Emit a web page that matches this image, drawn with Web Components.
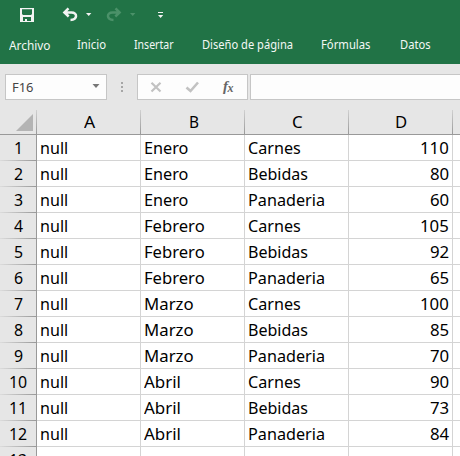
<!DOCTYPE html>
<html lang="es">
<head>
<meta charset="utf-8">
<title>Libro</title>
<style>
html,body{margin:0;width:460px;height:456px;overflow:hidden;background:#fff}
</style>
</head>
<body>
<excel-window></excel-window>
<script>
// Text run fitted to a given advance width.
customElements.define('fit-text', class extends HTMLElement {
  connectedCallback() {
    const root = this.attachShadow({mode:'open'});
    root.innerHTML = `<style>:host{display:inline-block;white-space:nowrap;width:${this.getAttribute('w')}px;text-align:left}span{display:inline-block;transform-origin:0 50%}</style><span><slot></slot></span>`;
    const s = root.querySelector('span');
    s.style.transform = `scaleX(${this.getAttribute('w') / s.getBoundingClientRect().width})`;
  }
});

customElements.define('quick-bar', class extends HTMLElement {
  connectedCallback() {
    this.attachShadow({mode:'open'}).innerHTML = `
<style>:host{display:block;height:30px}svg{display:block}</style>
<svg width="460" height="30" viewBox="0 0 460 30">
<path fill="#f3f3f3" fill-rule="evenodd" d="M20 8h14v14H20zM22 9.300V14l1 1h8l1-1V9.300zM23 17v4h2V19H27v2h4V17z"/>
<g fill="none" stroke="#f3f3f3" stroke-width="2.500"><path d="M68.500 8.300L64.400 12.500L68.700 16.500M65 12.500H71.500C77.700 12.500 77.700 19.700 70.500 19.900"/></g>
<path fill="#f3f3f3" d="M86 13h5.400l-2.700 3z"/>
<g fill="none" stroke="#4b9169" stroke-width="2.500"><path d="M115.500 8.300L119.600 12.500L115.300 16.500M119 12.500H112.500C106.300 12.500 106.300 19.700 113.500 19.900"/></g>
<path fill="#4b9169" d="M130 13h5.400l-2.700 3z"/>
<path fill="#f3f3f3" d="M158 12h5v1h-5zM158 15h5.200l-2.600 3z"/>
</svg>`;
  }
});

customElements.define('ribbon-tab', class extends HTMLElement {
  connectedCallback() {
    this.attachShadow({mode:'open'}).innerHTML = `
<style>:host{display:block;font:12.5px/18px "Noto Sans",sans-serif;color:#f4f8f5;height:18px}</style>
<fit-text w="${this.getAttribute('w')}">${this.getAttribute('label')}</fit-text>`;
  }
});

customElements.define('formula-bar', class extends HTMLElement {
  connectedCallback() {
    this.attachShadow({mode:'open'}).innerHTML = `
<style>
:host{display:flex;height:46px;padding:10px 0 0 5px;box-sizing:border-box;background:#e6e6e6}
.box{box-sizing:border-box;height:26px;border:1px solid #c6c6c6;background:#fdfdfd}
.name{width:102px;display:flex;justify-content:space-between;padding:0 6px;font:13px/25px "Noto Sans",sans-serif;color:#444}
.name svg{margin-top:9px}
.dots{width:30px}.tools{width:111px}.input{flex:1;margin-left:2px;border-right:0}
svg{display:block}
</style>
<div class="box name"><fit-text w="21.500">F16</fit-text><svg width="8" height="5"><path fill="#777" d="M0.500 0h7L4 4z"/></svg></div>
<svg class="dots" height="26" viewBox="0 0 30 26"><path fill="#a6a6a6" d="M14 8h2v2h-2zM14 12h2v2h-2zM14 16h2v2h-2z"/></svg>
<div class="box tools"><svg width="109" height="24" viewBox="0 0 109 24">
<path d="M13.500 7.700L22.500 16.500M22.500 7.700L13.500 16.500" stroke="#c2c2c2" stroke-width="2.200"/>
<path d="M48.500 12.500L52.500 16L60 7.500" fill="none" stroke="#c2c2c2" stroke-width="2.600"/>
<text x="85" y="16" font-family="Liberation Serif,serif" font-size="15" font-style="italic" font-weight="bold" fill="#666">f</text><text x="89.500" y="17" font-family="Liberation Serif,serif" font-size="12" font-style="italic" font-weight="bold" fill="#666">x</text>
</svg></div>
<div class="box input"></div>`;
  }
});

customElements.define('sheet-grid', class extends HTMLElement {
  connectedCallback() {
    const W = {null:28.2,Enero:44.4,Febrero:60.7,Marzo:49.6,Abril:37,Carnes:52.8,Bebidas:60,Panaderia:77};
    const months = ['Enero','Febrero','Marzo','Abril'], goods = ['Carnes','Bebidas','Panaderia'];
    const nums = [110,80,60,105,92,65,100,85,70,90,73,84];
    const t = s => `<fit-text w="${W[s] || String(s).length * 9.6}">${s}</fit-text>`;
    const cw = {A:11.2,B:10,C:10.7,D:12.2};
    let h = '<div class="corner"><svg width="37" height="25"><path fill="#b4b4b4" d="M33 4v17H16z"/></svg></div>';
    for (const c of 'ABCD') h += `<div class="col"><fit-text w="${cw[c]}">${c}</fit-text></div>`;
    h += '<div class="col last"></div>';
    for (let i = 0; i < 13; i++) {
      h += `<div class="row"><fit-text w="${String(i + 1).length * 9.100}">${i + 1}</fit-text></div>`;
      const v = i < 12 ? ['null', months[i / 3 | 0], goods[i % 3], nums[i]] : ['', '', '', ''];
      v.forEach((s, k) => h += `<div class="cell${k == 3 ? ' num' : ''}">${s === '' ? '' : t(s)}</div>`);
      h += '<div class="cell last"></div>';
    }
    this.attachShadow({mode:'open'}).innerHTML = `
<style>
:host{display:grid;grid-template-columns:37px repeat(4,104px) 7px;grid-template-rows:25px repeat(13,26px);height:346px;overflow:hidden;background:#fff;font:17px/26px "Noto Sans",sans-serif;color:#000}
div{box-sizing:border-box;overflow:hidden}
.corner,.col{border-bottom:1px solid #999;background:linear-gradient(#d0d0d0,#999) right/1px 100% no-repeat #e6e6e6}
.col{text-align:center;line-height:24px;padding-left:1px}
.col:nth-child(2){padding:0 1px 0 0}
.row{background:linear-gradient(90deg,#dcdcdc,#999) bottom/100% 1px no-repeat #e6e6e6;border-right:1px solid #999;text-align:center;padding-left:1px}
.cell{border-right:1px solid #d4d4d4;border-bottom:1px solid #d4d4d4;padding:0 3px}
.num{text-align:right}
.last{border-right:0}.col.last{background:#e6e6e6}
</style>${h}`;
  }
});

customElements.define('excel-window', class extends HTMLElement {
  connectedCallback() {
    this.attachShadow({mode:'open'}).innerHTML = `
<style>
:host{display:block;width:460px;height:456px;overflow:hidden}
header{background:#217346;height:64px}
nav{display:grid;grid-template-columns:68px 57px 68.500px 119px 79px 60px;padding:6px 0 0 8.500px}
ribbon-tab:first-child{margin-top:1px}
</style>
<header><quick-bar></quick-bar><nav>
<ribbon-tab label="Archivo" w="41.500"></ribbon-tab>
<ribbon-tab label="Inicio" w="29"></ribbon-tab>
<ribbon-tab label="Insertar" w="39.500"></ribbon-tab>
<ribbon-tab label="Diseño de página" w="91"></ribbon-tab>
<ribbon-tab label="Fórmulas" w="49.500"></ribbon-tab>
<ribbon-tab label="Datos" w="30.500"></ribbon-tab>
</nav></header>
<formula-bar></formula-bar>
<sheet-grid></sheet-grid>`;
  }
});
</script>
</body>
</html>
